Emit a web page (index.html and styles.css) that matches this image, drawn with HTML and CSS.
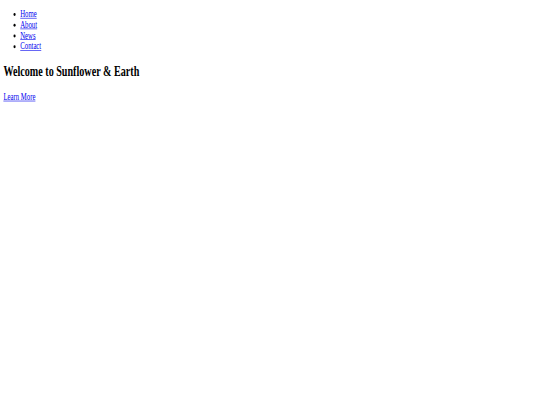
FILE: index.html
```html
<!DOCTYPE html>
<html>
<head>
<meta charset="utf-8">
<title>Sunflower &amp; Earth</title>
<link rel="stylesheet" href="styles.css">
</head>
<body>
<div class="page">
  <nav>
    <ul>
      <li><a href="#">Home</a></li>
      <li><a href="#">About</a></li>
      <li><a href="#">News</a></li>
      <li><a href="#">Contact</a></li>
    </ul>
  </nav>
  <section class="hero">
    <h1 class="hero-title">Welcome to Sunflower &amp; Earth</h1>
    <p><a href="#">Learn More</a></p>
  </section>
</div>
</body>
</html>
```
FILE: styles.css
```css
html, body {
  margin: 0;
  padding: 0;
  background: #ffffff;
  overflow: hidden;
}
.page {
  width: 1280px;
  height: 680px;
  padding: 8px;
  box-sizing: border-box;
  font-family: "Liberation Serif", "Times New Roman", serif;
  font-size: 16px;
  color: #000000;
  transform: scale(0.421875, 0.596);
  transform-origin: 0 0;
  display: flow-root;
}
.page ul {
  margin: 7px 0 16px;
}
.hero-title {
  font-size: 24px;
  margin: 19.92px 0;
}
.page a {
  color: #0000ee;
}
```
